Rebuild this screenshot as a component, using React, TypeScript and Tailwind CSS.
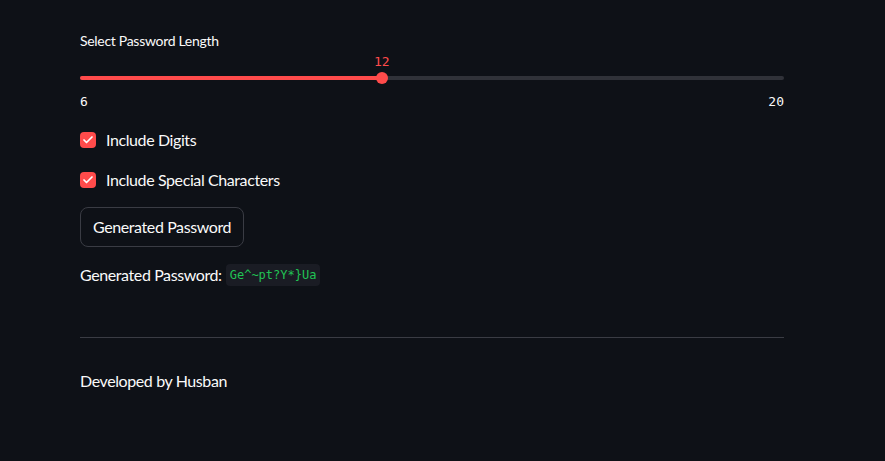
import { Check } from 'lucide-react';

const mono = { fontFamily: '"DejaVu Sans Mono", "Liberation Mono", monospace' };

function Slider({ min, max, value }: { min: number; max: number; value: number }) {
  const pct = ((value - min) / (max - min)) * 100;
  return (
    <div className="w-full">
      <div className="relative h-[30px]">
        {/* track */}
        <div className="absolute left-0 right-0 top-[21px] h-1 rounded bg-[#303239]" />
        <div className="absolute left-0 top-[21px] h-1 rounded bg-[#ff4b4b]" style={{ width: `${pct}%` }} />
        {/* thumb */}
        <div
          className="absolute top-[17px] h-3 w-3 -ml-1.5 rounded-full bg-[#ff4b4b]"
          style={{ left: `${pct}%` }}
        />
        <div
          className="absolute top-[-3px] -translate-x-1/2 text-[13px] text-[#ff4b4b]"
          style={{ left: `${pct}%`, ...mono }}
        >
          {value}
        </div>
      </div>
      <div className="flex justify-between text-[13px] text-[#fafafa] mt-[7px]" style={mono}>
        <span>{min}</span>
        <span>{max}</span>
      </div>
    </div>
  );
}

function CheckRow({ label }: { label: string }) {
  return (
    <label className="flex items-center gap-2.5 h-6">
      <span className="flex h-4 w-4 items-center justify-center rounded bg-[#ff4b4b]">
        <Check className="h-3 w-3 text-white" strokeWidth={3.5} />
      </span>
      <span className="text-base tracking-[-0.4px] text-[#fafafa]">{label}</span>
    </label>
  );
}

export default function App() {
  return (
    <div
      className="min-h-[461px] w-full bg-[#0e1117] text-[#fafafa]"
      style={{ fontFamily: 'Lato, "Noto Sans", sans-serif' }}
    >
      <div className="w-[704px] ml-[80px] pt-[31px]">
        {/* Slider */}
        <div className="text-sm tracking-[-0.3px] mb-[4px]">Select Password Length</div>
        <Slider min={6} max={20} value={12} />

        {/* Checkboxes */}
        <div className="flex flex-col gap-4 mt-[16px]">
          <CheckRow label="Include Digits" />
          <CheckRow label="Include Special Characters" />
        </div>

        {/* Button */}
        <button className="mt-[15px] h-[40px] px-3 rounded-lg border border-[#3a3c44] bg-[#0e1117] text-base tracking-[-0.4px] text-[#fafafa]">
          Generated Password
        </button>

        {/* Result */}
        <div className="mt-[16px] flex items-center text-base">
          <span className="tracking-[-0.4px]">Generated Password:</span>
          <code className="ml-1 rounded bg-[#1a1c24] px-1 py-0.5 text-[12px] text-[#21c354]" style={mono}>
            {'Ge^~pt?Y*}Ua'}
          </code>
        </div>

        <hr className="mt-[50px] border-t border-[#3a3c44]" />

        <div className="mt-[31px] text-base tracking-[-0.4px]">Developed by Husban</div>
      </div>
    </div>
  );
}
